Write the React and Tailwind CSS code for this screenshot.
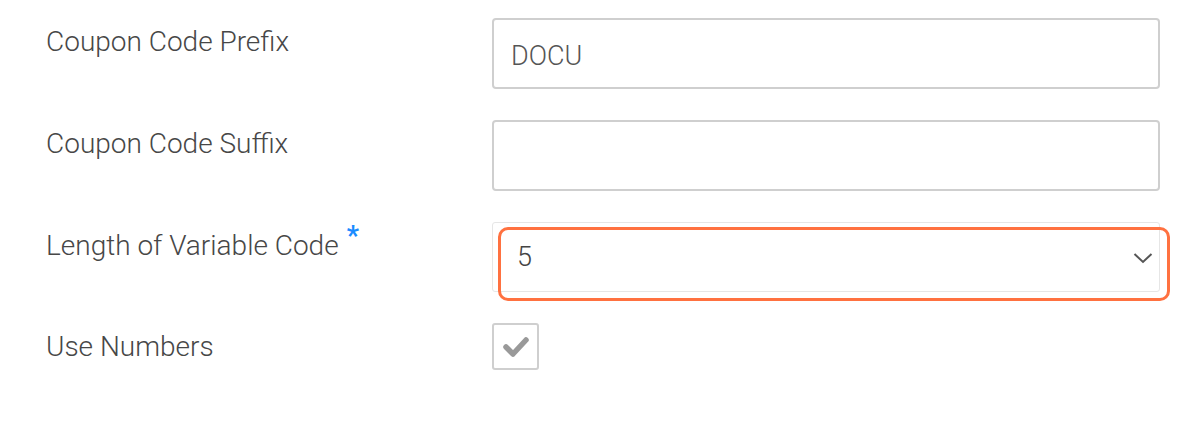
import React from "react"

const LABEL = "text-[28px] leading-[32px] text-[#474747] font-light"

function Row({ label, required, children }) {
  return (
    <div className="flex items-start">
      <div className={`w-[492px] shrink-0 pl-[46px] pt-[8px] ${LABEL}`}>
        {label}
        {required && (
          <span className="relative top-[-10px] ml-[8px] text-[27px] font-bold text-[#1a8cff]">*</span>
        )}
      </div>
      <div className="w-[668px] shrink-0">{children}</div>
    </div>
  )
}

export default function App() {
  return (
    <div className="w-[1200px] h-[422px] bg-white font-['Roboto',sans-serif] pt-[18px] flex flex-col gap-[31px]">
      <Row label="Coupon Code Prefix">
        <div className="h-[71px] border-2 border-[#cfcfcf] rounded-[4px] flex items-center pl-[17px] pt-[5px] text-[27px] font-light text-[#555]">
          DOCU
        </div>
      </Row>
      <Row label="Coupon Code Suffix">
        <div className="h-[71px] border-2 border-[#cfcfcf] rounded-[4px]" />
      </Row>
      <Row label="Length of Variable Code" required>
        <div className="relative">
          <div className="h-[70px] border border-[#e6e6e6] rounded-[3px] flex items-center justify-between pl-[24px] pr-[6px] text-[27px] font-light text-[#444]">
            <span>5</span>
            <svg width="20" height="12" viewBox="0 0 20 12" className="mt-[2px]">
              <polyline points="1.5,2 10,10 18.5,2" fill="none" stroke="#555" strokeWidth="2" />
            </svg>
          </div>
          <div className="absolute left-[6px] top-[5px] w-[672px] h-[74px] border-[3px] border-[#ff7140] rounded-[10px] pointer-events-none" />
        </div>
      </Row>
      <Row label="Use Numbers">
        <div className="w-[47px] h-[47px] border-2 border-[#cfcfcf] rounded-[3px] flex items-center justify-center">
          <svg width="28" height="22" viewBox="0 0 28 22">
            <polyline points="4,11 11,18 24,4" fill="none" stroke="#999" strokeWidth="5.5" strokeLinecap="round" strokeLinejoin="round" />
          </svg>
        </div>
      </Row>
    </div>
  )
}
